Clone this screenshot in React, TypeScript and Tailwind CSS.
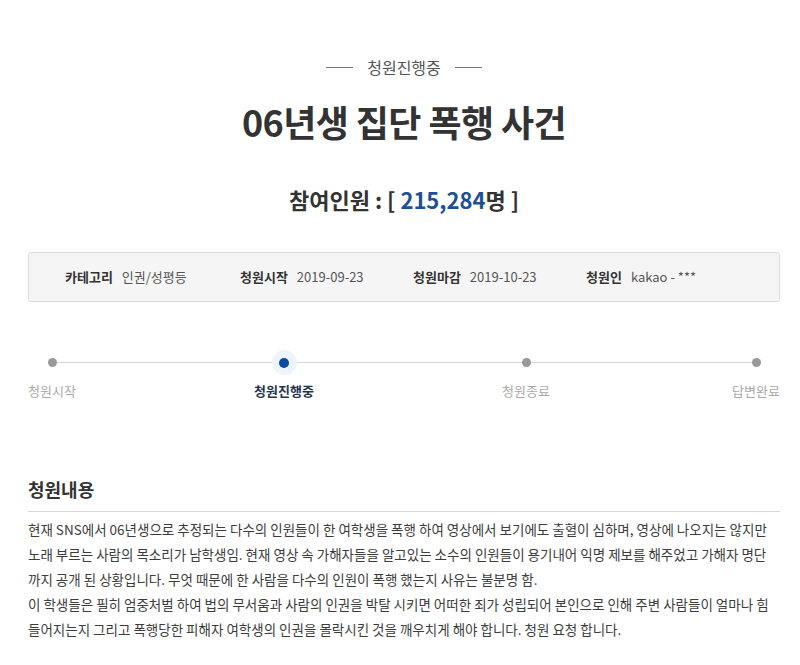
const steps = [
  { label: "청원시작", active: false, gap: "" },
  { label: "청원진행중", active: true, gap: "ml-[184px]" },
  { label: "청원종료", active: false, gap: "ml-[194px]" },
  { label: "답변완료", active: false, gap: "ml-[182px]" },
];

const info = [
  { label: "카테고리", value: "인권/성평등", width: "w-[175px]" },
  { label: "청원시작", value: "2019-09-23", width: "w-[173px]" },
  { label: "청원마감", value: "2019-10-23", width: "w-[173px]" },
  { label: "청원인", value: "kakao - ***", width: "" },
];

// petition text, broken the way the board lays it out
const lines = [
  "현재 SNS에서 06년생으로 추정되는 다수의 인원들이 한 여학생을 폭행 하여 영상에서 보기에도 출혈이 심하며, 영상에 나오지는 않지만",
  "노래 부르는 사람의 목소리가 남학생임. 현재 영상 속 가해자들을 알고있는 소수의 인원들이 용기내어 익명 제보를 해주었고 가해자 명단",
  "까지 공개 된 상황입니다. 무엇 때문에 한 사람을 다수의 인원이 폭행 했는지 사유는 불분명 함.",
  "이 학생들은 필히 엄중처벌 하여 법의 무서움과 사람의 인권을 박탈 시키면 어떠한 죄가 성립되어 본인으로 인해 주변 사람들이 얼마나 힘",
  "들어지는지 그리고 폭행당한 피해자 여학생의 인권을 몰락시킨 것을 깨우치게 해야 합니다. 청원 요청 합니다.",
];

export default function App() {
  return (
    <div
      className="w-[800px] h-[665px] overflow-hidden bg-white text-[#333]"
      style={{ fontFamily: '"Noto Sans CJK KR", "Noto Sans", sans-serif' }}
    >
      <div className="ml-[28px] w-[752px] pt-[54px]">
        {/* status heading */}
        <div className="flex items-center justify-center gap-[14px] text-[16px] leading-[26px] text-[#555]">
          <span className="w-[27px] h-px bg-[#777]" />
          <span>청원진행중</span>
          <span className="w-[27px] h-px bg-[#777]" />
        </div>

        <h1 className="mt-[17px] text-center text-[36px] leading-[48px] font-bold text-[#333] tracking-[-0.6px]">
          06년생 집단 폭행 사건
        </h1>

        <p className="mt-[38px] text-center text-[22px] leading-[32px] font-bold text-[#333]">
          참여인원 : [ <span className="text-[#1c4f94]">215,284</span>명 ]
        </p>

        {/* meta box */}
        <div className="mt-[37px] h-[50px] flex items-center rounded-[3px] border border-[#dcdcdc] bg-[#f5f5f5] pl-[36px] text-[13px]">
          {info.map((it) => (
            <div key={it.label} className={`${it.width} flex gap-[9px]`}>
              <span className="font-bold text-[#333]">{it.label}</span>
              <span className="text-[#555]">{it.value}</span>
            </div>
          ))}
        </div>

        {/* progress steps */}
        <div className="relative mt-[55px]">
          <div className="absolute left-[24px] right-[24px] top-[5px] h-px bg-[#d6d6d6]" />
          <div className="relative flex">
            {steps.map((s) => (
              <div key={s.label} className={`${s.gap} w-[48px] flex flex-col items-center`}>
                <div className="relative h-[11px] w-[11px] flex items-center justify-center">
                  {s.active && (
                    <span className="absolute left-[-7px] top-[-7px] h-[25px] w-[25px] rounded-full bg-[#eef4fb]" />
                  )}
                  <span
                    className={
                      s.active
                        ? "relative h-[10px] w-[10px] rounded-full bg-[#0b4a9e]"
                        : "relative h-[9px] w-[9px] rounded-full bg-[#999]"
                    }
                  />
                </div>
                <span
                  className={
                    s.active
                      ? "mt-[13px] whitespace-nowrap text-[13px] leading-[20px] font-bold text-[#1f3550]"
                      : "mt-[13px] whitespace-nowrap text-[13px] leading-[20px] text-[#aaa]"
                  }
                >
                  {s.label}
                </span>
              </div>
            ))}
          </div>
        </div>

        {/* petition content */}
        <h2 className="mt-[75px] text-[18px] leading-[26px] font-bold text-[#333]">청원내용</h2>
        <div className="mt-[9px] h-px bg-[#d8d8d8]" />
        <div className="mt-[5px] text-[13.5px] leading-[25px] text-[#3c3c3c]">
          {lines.map((l, i) => (
            <p key={i} className="whitespace-nowrap">
              {l}
            </p>
          ))}
        </div>
      </div>
    </div>
  );
}
